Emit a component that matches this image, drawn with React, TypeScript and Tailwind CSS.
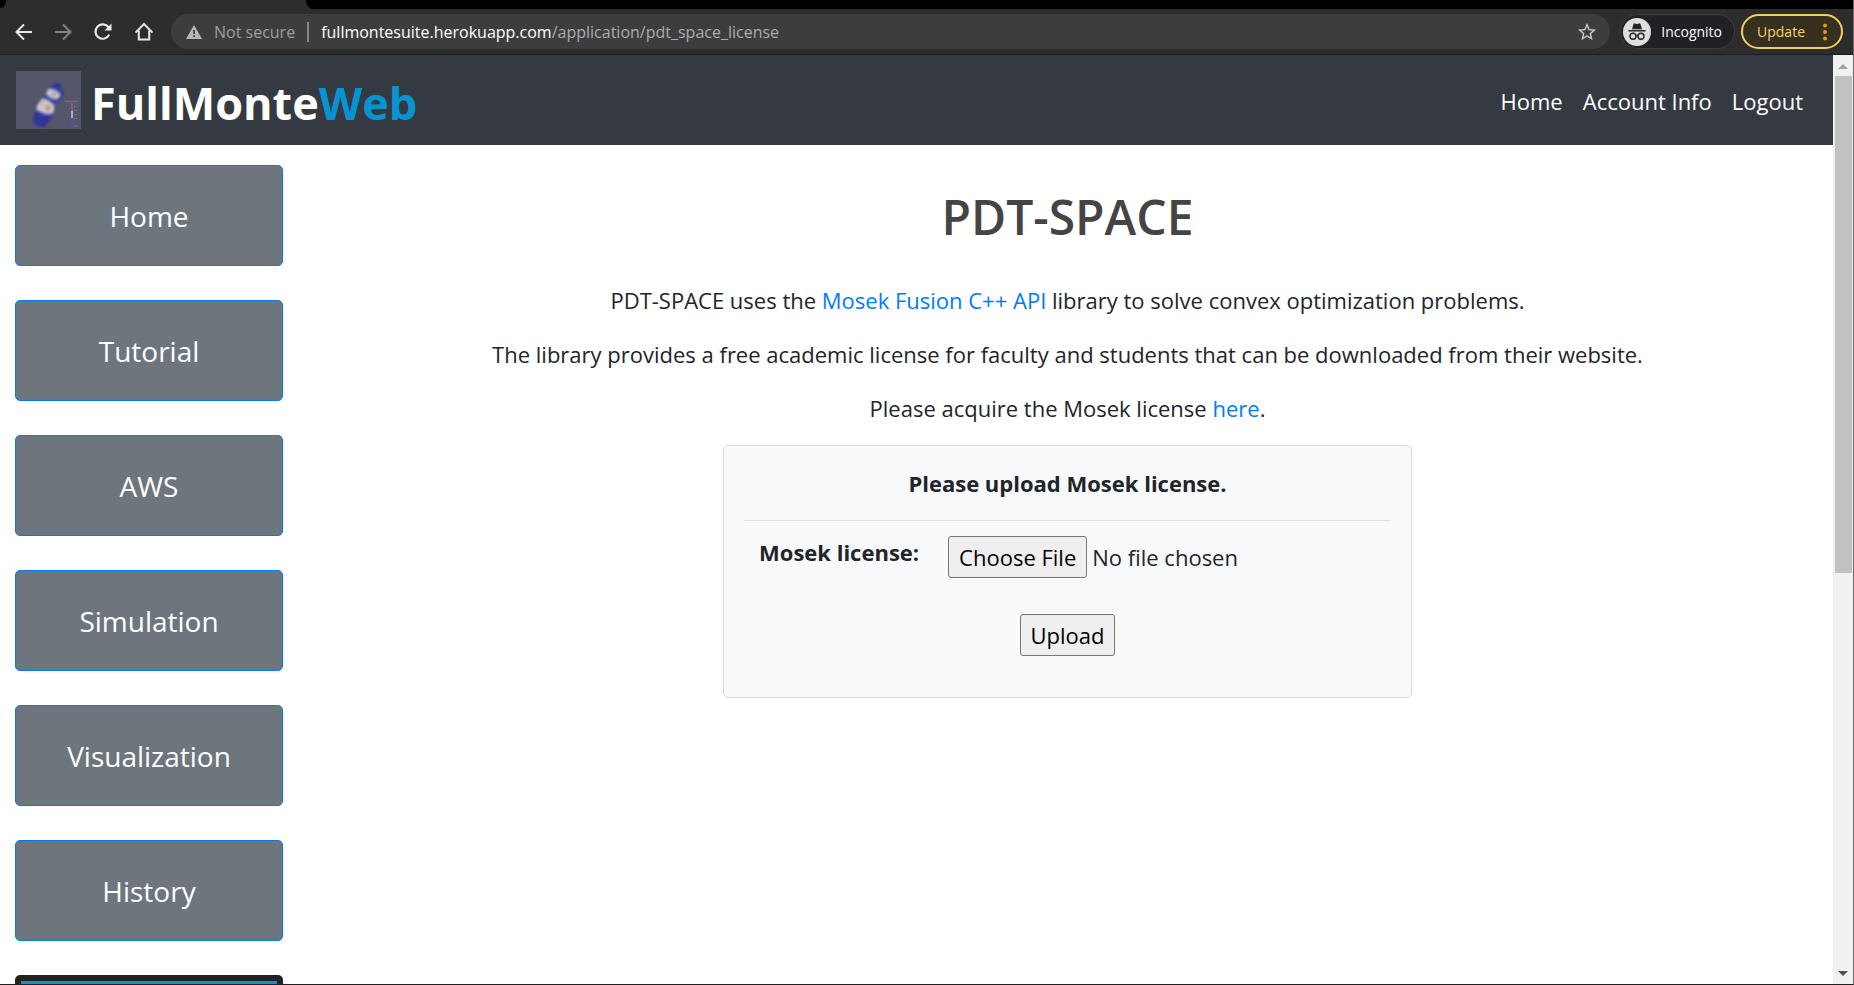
import { useState } from "react";

const sections = ["Home", "Tutorial", "AWS", "Simulation", "Visualization", "History"];

function BackIcon({ className }: { className: string }) {
  return (
    <svg viewBox="0 0 18 18" className={className} fill="none" stroke="currentColor" strokeWidth="2">
      <path d="M17 9H2M9 1.5 1.5 9 9 16.5" />
    </svg>
  );
}

function ReloadIcon() {
  return (
    <svg viewBox="0 0 20 20" className="size-5" fill="none">
      <path d="M16.2 12.6A7.2 7.2 0 1 1 15.6 5.4" stroke="#e8e8e8" strokeWidth="2.2" />
      <path d="M18.5 1.5v7h-7z" fill="#e8e8e8" />
    </svg>
  );
}

function HomeIcon() {
  return (
    <svg viewBox="0 0 20 20" className="size-5" fill="none" stroke="#e8e8e8" strokeWidth="2">
      <path d="M1.5 10.6 10 2l8.500 8.600M4.800 8.500v9h10.400v-9" />
    </svg>
  );
}

function WarningIcon() {
  return (
    <svg viewBox="0 0 16 14" className="h-[14px] w-4 shrink-0">
      <path d="M8 0l8 14H0z" fill="#b4b7ba" />
      <path d="M7.200 5h1.700v4H7.200zM7.200 10.300h1.700v1.700H7.200z" fill="#3c3c3c" />
    </svg>
  );
}

function StarIcon() {
  return (
    <svg viewBox="0 0 24 24" className="size-[22px]" fill="#c4c4c4">
      <path d="M22 9.240l-7.190-.620L12 2 9.190 8.630 2 9.240l5.460 4.730L5.820 21 12 17.270 18.180 21l-1.630-7.030L22 9.240zM12 15.400l-3.760 2.270 1-4.280-3.320-2.880 4.380-.380L12 6.100l1.710 4.040 4.380.380-3.320 2.880 1 4.280L12 15.400z" />
    </svg>
  );
}

function IncognitoIcon() {
  return (
    <svg viewBox="0 0 28 28" className="size-7 shrink-0">
      <circle cx="14" cy="14" r="14" fill="#dedede" />
      <path d="M9 11.200 10.500 6q.3-.9 1.200-.6l2.300.6 2.300-.6q.9-.3 1.200.6L19 11.200z" fill="#232427" />
      <path d="M5.500 12h17v1.500h-17z" fill="#232427" />
      <g fill="none" stroke="#232427" strokeWidth="1.400">
        <circle cx="10" cy="18.300" r="3" />
        <circle cx="18" cy="18.300" r="3" />
        <path d="M13 18q1-.8 2 0" />
      </g>
    </svg>
  );
}

function MouseLogo() {
  return (
    <svg viewBox="0 0 65 58" className="h-[58px] w-[65px] shrink-0" role="img" aria-label="FullMonte">
      <defs>
        <filter id="soft" x="-10%" y="-10%" width="120%" height="120%">
          <feGaussianBlur stdDeviation="0.8" />
        </filter>
        <filter id="glow" x="-50%" y="-50%" width="200%" height="200%">
          <feGaussianBlur stdDeviation="1.3" />
        </filter>
        <clipPath id="body">
          <path d="M38 13q5-2 7 0l-1 6q2 1 3 1 1 4-4 8-3 2-4 6-1 9-6 16-2 5-5 6l-3 1-2-2-4-1-2-4q1-7 3-11 1-6 5-10 4-3 5-7 2-6 8-9z" />
        </clipPath>
      </defs>
      <rect width="65" height="58" fill="#55566b" />
      <g filter="url(#soft)">
        <g clipPath="url(#body)">
          <rect x="14" y="10" width="36" height="48" fill="#2f3696" />
          <g filter="url(#glow)">
            <ellipse cx="37" cy="23" rx="8" ry="4.500" fill="#c6c9d6" transform="rotate(25 37 23)" />
            <ellipse cx="28" cy="35" rx="12" ry="7" fill="#c6cad8" transform="rotate(25 28 35)" />
          </g>
          <circle cx="38" cy="23" r="2.300" fill="#cfa187" />
          <circle cx="26" cy="33" r="2.600" fill="#d3b39c" />
          <circle cx="32" cy="37" r="3" fill="#d6966c" />
        </g>
        <path d="M45 20q3 2 1 5l-5 5" fill="none" stroke="#2f3696" strokeWidth="2" />
      </g>
      <path d="M49 30.500h13" stroke="#6b6c80" strokeWidth="1.500" />
      <path d="M58 35.500h3M58 39.500h3M58 43.500h3M58 47.500h3M57 55h5" stroke="#6e6f83" />
      <path d="M56 32v8" stroke="#a8605f" strokeWidth="1.800" />
      <path d="M56 40v7" stroke="#b9b9cc" strokeWidth="1.800" />
      <path d="M56 47v8" stroke="#4a55b4" strokeWidth="1.800" />
    </svg>
  );
}

function BrowserBar() {
  return (
    <header className="shrink-0 border-b border-[#1d1d1d] bg-[#2d2d2d] font-['Open_Sans','Noto_Sans',sans-serif]">
      <div className="flex h-[9px] justify-between">
        <div className="h-2 w-1.5 rounded-br-md bg-black" />
        <div className="ml-[300px] flex-1 rounded-bl-lg bg-black" />
      </div>
      <div className="flex h-[45px] items-center pr-2.5 pl-[15px]">
        <div className="flex items-center gap-[21px] pr-[17px]">
          <button type="button" aria-label="Back" className="text-[#e8e8e8]">
            <BackIcon className="size-[18px]" />
          </button>
          <button type="button" aria-label="Forward" className="text-[#828282]">
            <BackIcon className="size-[18px] rotate-180" />
          </button>
          <button type="button" aria-label="Reload">
            <ReloadIcon />
          </button>
          <button type="button" aria-label="Home page">
            <HomeIcon />
          </button>
        </div>
        <div className="flex h-[35px] flex-1 items-center rounded-full bg-[#3d3d3d] pr-3 pl-[15px] text-base">
          <WarningIcon />
          <span className="ml-3 text-[#9c9fa3]">Not secure</span>
          <span className="mx-3 h-5 w-0.5 bg-[#85878a]" />
          <span className="flex-1 text-[#a9acb0]">
            <span className="text-white">fullmontesuite.herokuapp.com</span>/application/pdt_space_license
          </span>
          <button type="button" aria-label="Bookmark this page">
            <StarIcon />
          </button>
        </div>
        <div className="ml-2.5 flex h-[35px] items-center gap-2.5 rounded-full border border-[#3d3e40] bg-[#202124] pr-3 pl-0.5 text-sm text-white">
          <IncognitoIcon />
          Incognito
        </div>
        <button
          type="button"
          className="ml-1.5 flex h-[35px] items-center gap-[18px] rounded-full border-2 border-[#f4ce5d] bg-[#35301f] pr-3.5 pl-3.5 text-sm text-[#f6d271]"
        >
          Update
          <svg viewBox="0 0 4 18" className="h-[18px] w-1" fill="#f29900">
            <circle cx="2" cy="2.500" r="2" />
            <circle cx="2" cy="9" r="2" />
            <circle cx="2" cy="15.500" r="2" />
          </svg>
        </button>
      </div>
    </header>
  );
}

function NavBar() {
  return (
    <nav className="flex h-[90px] items-center justify-between bg-[#343a40] pr-[30px] pl-4">
      <a href="#home" className="flex items-center gap-2.5">
        <MouseLogo />
        <span className="pt-1 text-[45px] leading-none font-bold text-white">
          FullMonte<span className="text-[#0894d3]">Web</span>
        </span>
      </a>
      <div className="flex gap-5 pt-0.5 text-[22px] text-white">
        <a href="#home">Home</a>
        <a href="#account">Account Info</a>
        <a href="#logout">Logout</a>
      </div>
    </nav>
  );
}

function Sidebar() {
  return (
    <aside className="flex w-[302px] shrink-0 flex-col gap-[34px] pt-5 pr-[19px] pl-[15px]">
      {sections.map((name) => (
        <a
          key={name}
          href={`#${name.toLowerCase()}`}
          className="flex h-[101px] shrink-0 items-center justify-center rounded-[5px] border border-[#007bff] bg-[#6d767c] text-[28px] text-white"
        >
          {name}
        </a>
      ))}
      <a
        href="#pdt-space"
        aria-label="PDT-SPACE"
        className="h-[101px] shrink-0 rounded-[5px] border-[6px] border-[#222222] bg-[#0894d3]"
      />
    </aside>
  );
}

function UploadCard() {
  const [, setFile] = useState<File | null>(null);
  return (
    <form
      onSubmit={(event) => event.preventDefault()}
      className="mt-[21px] flex h-[253px] w-[45%] flex-col rounded-[5px] border border-[#d9dbdd] bg-[#f8f9fb] px-5"
    >
      <h2 className="border-b border-[#dfe1e4] pt-[21px] pb-[21px] text-center leading-8 font-bold">
        Please upload Mosek license.
      </h2>
      <div className="flex items-start gap-[29px] pt-[15px] pl-[15px]">
        <label htmlFor="license" className="leading-8 font-bold">
          Mosek license:
        </label>
        <input
          id="license"
          type="file"
          onChange={(event) => setFile(event.target.files?.[0] ?? null)}
          className="min-w-0 flex-1 file:mr-[5px] file:h-[42px] file:rounded-[3px] file:border file:border-solid file:border-[#767676] file:bg-[#efefef] file:px-2.5 file:text-black"
        />
      </div>
      <button
        type="submit"
        className="mt-9 h-[42px] self-center rounded-[3px] border border-[#767676] bg-[#efefef] px-2.5 text-black"
      >
        Upload
      </button>
    </form>
  );
}

function ScrollBar() {
  return (
    <div aria-hidden="true" className="flex w-5 shrink-0 flex-col items-center bg-[#f1f1f1]">
      <svg viewBox="0 0 10 5" className="mt-[9px] h-[5px] w-2.5" fill="#a3a3a3">
        <path d="M5 0l5 5H0z" />
      </svg>
      <div className="mt-[7px] h-[53.5%] w-[17px] shrink-0 bg-[#c1c1c1]" />
      <svg viewBox="0 0 10 5" className="mt-auto mb-2 h-[5px] w-2.5" fill="#505050">
        <path d="M0 0h10L5 5z" />
      </svg>
    </div>
  );
}

export default function App() {
  return (
    <div className="flex h-screen flex-col overflow-hidden border-r border-b border-r-[#6b6b6b] border-b-[#202124] bg-white font-['Open_Sans','Noto_Sans',sans-serif] text-[#212529]">
      <BrowserBar />
      <div className="flex min-h-0 flex-1">
        <div className="min-w-0 flex-1 overflow-hidden">
          <NavBar />
          <div className="flex">
            <Sidebar />
            <main className="flex min-w-0 flex-1 flex-col items-center text-[22px] leading-8">
              <h1 className="mt-10 text-5xl leading-[64px] font-semibold text-[#444444]">PDT-SPACE</h1>
              <div className="mt-[35px] flex flex-col gap-[22px] text-center">
                <p>
                  PDT-SPACE uses the{" "}
                  <a href="#mosek" className="text-[#007bff]">
                    Mosek Fusion C++ API
                  </a>{" "}
                  library to solve convex optimization problems.
                </p>
                <p>
                  The library provides a free academic license for faculty and students that can be downloaded from
                  their website.
                </p>
                <p>
                  Please acquire the Mosek license{" "}
                  <a href="#license-page" className="text-[#007bff]">
                    here
                  </a>
                  .
                </p>
              </div>
              <UploadCard />
            </main>
          </div>
        </div>
        <ScrollBar />
      </div>
    </div>
  );
}
